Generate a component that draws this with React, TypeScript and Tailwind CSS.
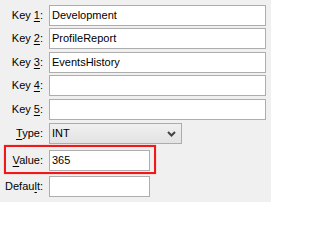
import React from "react";

function Label({ text, keyChar, index }: { text: string; keyChar: string; index: number }) {
  // underline the access key like a classic Windows dialog
  return (
    <span className="w-[43px] shrink-0 text-right whitespace-nowrap">
      {text.slice(0, index)}
      <u className="underline-offset-[2px]">{keyChar}</u>
      {text.slice(index + 1)}
    </span>
  );
}

function TextBox({ width, value }: { width: string; value?: string }) {
  return (
    <div className={`${width} h-[21px] border border-[#adadad] bg-white pl-[2px] leading-[19px]`}>
      {value}
    </div>
  );
}

export default function App() {
  const keys = [
    { n: "1", value: "Development", mt: "mt-[5px]" },
    { n: "2", value: "ProfileReport", mt: "mt-[2px]" },
    { n: "3", value: "EventsHistory", mt: "mt-[3px]" },
    { n: "4", value: "", mt: "mt-[2px]" },
    { n: "5", value: "", mt: "mt-[3px]" },
  ];

  return (
    <div
      className="relative w-[271px] h-[202px] overflow-hidden bg-[#f0f0f0] text-[11px] text-black"
      style={{ fontFamily: '"Liberation Sans", Arial, sans-serif' }}
    >
      <div className="flex flex-col">
        {keys.map((k) => (
          <div key={k.n} className={`${k.mt} flex h-[21px] items-center gap-[6px]`}>
            <Label text={`Key ${k.n}:`} keyChar={k.n} index={4} />
            <TextBox width="w-[217px]" value={k.value} />
          </div>
        ))}

        <div className="mt-[3px] flex h-[21px] items-center gap-[6px]">
          <Label text="Type:" keyChar="T" index={0} />
          <div className="flex h-[21px] w-[133px] items-center justify-between border border-[#acacac] bg-gradient-to-b from-[#f0f0f0] to-[#e3e3e3] pl-[2px] pr-[5px]">
            <span>INT</span>
            <svg width="9" height="6" viewBox="0 0 9 6">
              <path d="M1 1 L4.5 4.5 L8 1" fill="none" stroke="#444" strokeWidth="2" />
            </svg>
          </div>
        </div>

        <div className="mt-[6px] flex h-[21px] items-center gap-[6px]">
          <Label text="Value:" keyChar="V" index={0} />
          <TextBox width="w-[101px]" value="365" />
        </div>

        <div className="mt-[5px] flex h-[21px] items-center gap-[6px]">
          <Label text="Default:" keyChar="l" index={5} />
          <TextBox width="w-[101px]" />
        </div>
      </div>

      <div className="absolute left-[4px] top-[145px] h-[29px] w-[152px] border-2 border-[#f01818] shadow-[0_0_1px_#ff8080]" />
    </div>
  );
}
